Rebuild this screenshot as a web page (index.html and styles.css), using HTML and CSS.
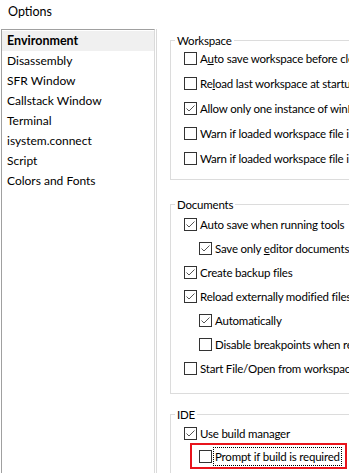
FILE: index.html
```html
<!DOCTYPE html>
<html>
<head>
<meta charset="utf-8">
<title>Options</title>
<link rel="stylesheet" href="styles.css">
</head>
<body>
<div class="title">Options</div>
<div class="main">
  <div class="listwrap">
    <ul class="list">
      <li class="sel">Environment</li>
      <li>Disassembly</li>
      <li>SFR Window</li>
      <li>Callstack Window</li>
      <li>Terminal</li>
      <li>isystem.connect</li>
      <li>Script</li>
      <li>Colors and Fonts</li>
    </ul>
  </div>
  <div class="pages">
    <div class="group g-ws">
      <span class="legend">Workspace</span>
      <div class="row"><svg class="cb" viewBox="0 0 13 13"><rect x="0.5" y="0.5" width="12" height="12" fill="#fff" stroke="#333"/></svg><span>A<u>u</u>to save workspace before closing</span></div>
      <div class="row"><svg class="cb" viewBox="0 0 13 13"><rect x="0.5" y="0.5" width="12" height="12" fill="#fff" stroke="#333"/></svg><span>Re<u>l</u>oad last workspace at startup</span></div>
      <div class="row"><svg class="cb" viewBox="0 0 13 13"><rect x="0.5" y="0.5" width="12" height="12" fill="#fff" stroke="#333"/><path d="M2.5 6.5 L5 9 L10.5 3.5" fill="none" stroke="#555"/></svg><span>Allow only one instance of winIDEA</span></div>
      <div class="row"><svg class="cb" viewBox="0 0 13 13"><rect x="0.5" y="0.5" width="12" height="12" fill="#fff" stroke="#333"/></svg><span>Warn if loaded workspace file is read-only</span></div>
      <div class="row"><svg class="cb" viewBox="0 0 13 13"><rect x="0.5" y="0.5" width="12" height="12" fill="#fff" stroke="#333"/></svg><span>Warn if loaded workspace file is outdated</span></div>
    </div>
    <div class="group g-doc">
      <span class="legend">Documents</span>
      <div class="row"><svg class="cb" viewBox="0 0 13 13"><rect x="0.5" y="0.5" width="12" height="12" fill="#fff" stroke="#333"/><path d="M2.5 6.5 L5 9 L10.5 3.5" fill="none" stroke="#555"/></svg><span>Auto save when running tools</span></div>
      <div class="row ind"><svg class="cb" viewBox="0 0 13 13"><rect x="0.5" y="0.5" width="12" height="12" fill="#fff" stroke="#333"/><path d="M2.5 6.5 L5 9 L10.5 3.5" fill="none" stroke="#555"/></svg><span>Save only <u>e</u>ditor documents</span></div>
      <div class="row"><svg class="cb" viewBox="0 0 13 13"><rect x="0.5" y="0.5" width="12" height="12" fill="#fff" stroke="#333"/><path d="M2.5 6.5 L5 9 L10.5 3.5" fill="none" stroke="#555"/></svg><span>Create backup files</span></div>
      <div class="row"><svg class="cb" viewBox="0 0 13 13"><rect x="0.5" y="0.5" width="12" height="12" fill="#fff" stroke="#333"/><path d="M2.5 6.5 L5 9 L10.5 3.5" fill="none" stroke="#555"/></svg><span>Reload externally modified files</span></div>
      <div class="row ind"><svg class="cb" viewBox="0 0 13 13"><rect x="0.5" y="0.5" width="12" height="12" fill="#fff" stroke="#333"/><path d="M2.5 6.5 L5 9 L10.5 3.5" fill="none" stroke="#555"/></svg><span>Automatically</span></div>
      <div class="row ind"><svg class="cb" viewBox="0 0 13 13"><rect x="0.5" y="0.5" width="12" height="12" fill="#fff" stroke="#333"/></svg><span>Disable breakpoints when reloading</span></div>
      <div class="row"><svg class="cb" viewBox="0 0 13 13"><rect x="0.5" y="0.5" width="12" height="12" fill="#fff" stroke="#333"/></svg><span>Start File/Open from workspace folder</span></div>
    </div>
    <div class="group g-ide">
      <span class="legend">IDE</span>
      <div class="row"><svg class="cb" viewBox="0 0 13 13"><rect x="0.5" y="0.5" width="12" height="12" fill="#fff" stroke="#333"/><path d="M2.5 6.5 L5 9 L10.5 3.5" fill="none" stroke="#555"/></svg><span>Use build manager</span></div>
      <div class="mark">
        <svg class="cb cb-f" viewBox="0 0 13 13"><rect x="0.5" y="0.5" width="12" height="12" fill="#fff" stroke="#333"/></svg><span class="focus">Prompt if build is required</span>
      </div>
    </div>
  </div>
</div>
</body>
</html>
```

FILE: styles.css
```css
html, body {
  margin: 0;
  padding: 0;
}
body {
  width: 349px;
  height: 473px;
  overflow: hidden;
  background: #fff;
  color: #000;
  font-family: Lato, "Segoe UI", sans-serif;
  font-size: 12px;
}
.title {
  box-sizing: border-box;
  height: 29px;
  padding: 4px 0 0 8px;
  font-size: 12.5px;
  line-height: 16px;
}
.main {
  display: flex;
  height: 444px;
}
.listwrap {
  display: flex;
  margin-left: 1px;
  padding-right: 1px;
  border-right: 1px solid #dadada;
}
.list {
  box-sizing: border-box;
  width: 154px;
  margin: 0;
  padding: 1px 0 0 0;
  list-style: none;
  font-size: 12px;
  border-top: 1px solid #a0a0a0;
  border-left: 1px solid #a0a0a0;
  border-right: 1px solid #dadada;
}
.list li {
  height: 20px;
  line-height: 20px;
  padding-left: 5px;
  white-space: nowrap;
}
.list li.sel {
  font-size: 12.5px;
  font-weight: bold;
  background: #f0f0f0;
}
.pages {
  display: flex;
  flex-direction: column;
  margin-left: 13px;
  font-size: 11.5px;
  letter-spacing: -0.2px;
}
.group {
  position: relative;
  width: 300px;
  border: 1px solid #dcdcdc;
}
.legend {
  position: absolute;
  top: -8px;
  left: 4px;
  padding: 0 2px;
  line-height: 16px;
  background: #fff;
  white-space: nowrap;
}
.row {
  display: flex;
  align-items: center;
  height: 25px;
  padding-left: 13px;
  white-space: nowrap;
}
.row.ind {
  padding-left: 28px;
}
.cb {
  flex: none;
  width: 13px;
  height: 13px;
  margin-right: 3px;
}
.g-ws {
  margin-top: 11px;
  padding: 5px 0 8px;
}
.g-doc {
  margin-top: 24px;
  padding: 7px 0 13px;
}
.g-doc .row {
  height: 24px;
}
.g-ide {
  margin-top: 20px;
  padding: 6px 0 10px;
}
.g-ide .row {
  height: 24px;
}
.mark {
  display: flex;
  align-items: center;
  align-self: flex-start;
  width: max-content;
  height: 22px;
  margin: -2px 0 0 19px;
  padding: 0 3px 0 7px;
  border: 2px solid #e8141c;
  white-space: nowrap;
}
.cb-f {
  margin-right: 1px;
}
.focus {
  padding: 0 1px;
  line-height: 17px;
  border: 1px dotted #000;
}
```
